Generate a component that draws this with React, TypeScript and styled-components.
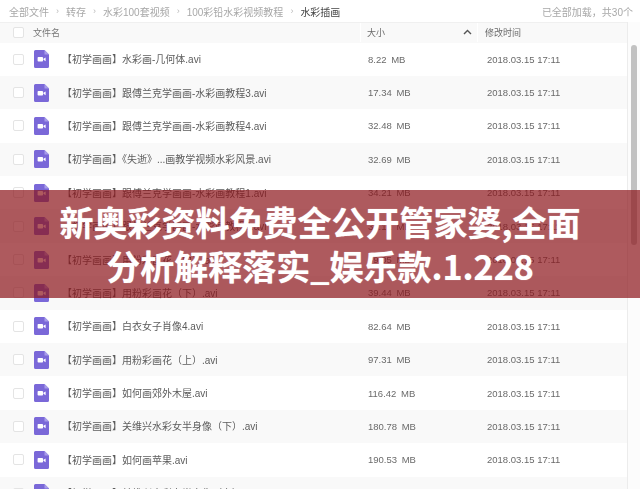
import React from 'react'
import styled, { createGlobalStyle } from 'styled-components'

const GlobalStyle = createGlobalStyle`
  html, body {
    margin: 0;
    padding: 0;
    background: #fff;
  }
  body {
    font-family: "Liberation Sans", "Noto Sans CJK SC", sans-serif;
  }
`

const Page = styled.div`
  position: relative;
  width: 640px;
  height: 489px;
  overflow: hidden;
  background: #fff;
`

const Blurred = styled.div`
  height: 489px;
  filter: blur(0.55px);
`

const Breadcrumb = styled.div`
  height: 22px;
  display: flex;
  align-items: center;
  justify-content: space-between;
  padding: 0 7px 0 9px;
  font-size: 10px;
  color: #a8a8a8;
`

const Crumbs = styled.div`
  display: flex;
  align-items: center;
  gap: 7px;
`

const Current = styled.span`
  color: #444;
`

const Sep = styled.span`
  color: #bbb;
  font-size: 9px;
`

const Body = styled.div`
  display: flex;
`

const Table = styled.div`
  flex: 1;
`

const Scrollbar = styled.div`
  width: 13px;
  height: 467px;
  box-sizing: border-box;
  border-left: 1px solid #ececec;
  padding: 23px 3px 0 3px;
  background: #fcfcfc;
`

const Thumb = styled.div`
  width: 6px;
  height: 200px;
  border-radius: 3px;
  background: #c2c2c2;
`

const Grid = styled.div<{ $striped?: boolean; $head?: boolean }>`
  display: grid;
  grid-template-columns: 360px 118px 1fr;
  align-items: center;
  height: ${p => (p.$head ? '20.5px' : '33.4px')};
  background: ${p => (p.$head || p.$striped ? '#f9f9f9' : '#fff')};
  ${p => p.$head && 'border-top: 1px solid #f0f0f0; box-sizing: border-box; padding-bottom: 1px;'}
`

const NameCell = styled.div`
  display: flex;
  align-items: center;
  min-width: 0;
`

const Box = styled.span`
  width: 9px;
  height: 9px;
  margin-left: 13px;
  flex: none;
  border: 1px solid #e4e4e4;
  border-radius: 2px;
  background: #fff;
`

const HeadLabel = styled.span`
  font-size: 9px;
  color: #777;
  margin-left: 9px;
`

const FileName = styled.span`
  font-size: 10px;
  color: #5c5c5c;
  margin: 0 0 1px 13px;
  white-space: nowrap;
`

const Icon = styled.svg`
  width: 15px;
  height: 18px;
  margin-left: 10px;
  flex: none;
`

const SizeCell = styled.div<{ $head?: boolean }>`
  display: flex;
  align-items: center;
  justify-content: space-between;
  height: 100%;
  box-sizing: border-box;
  padding: 0 5px 0 ${p => (p.$head ? '6px' : '8px')};
  font-size: ${p => (p.$head ? '9px' : '9.5px')};
  word-spacing: 2px;
  color: #6a6a6a;
  ${p => p.$head && 'border-left: 1px solid #fff; border-right: 1px solid #fff;'}
`

const DateCell = styled.div<{ $head?: boolean }>`
  padding-left: ${p => (p.$head ? '7px' : '9px')};
  font-size: ${p => (p.$head ? '9px' : '9.5px')};
  color: #6a6a6a;
`

const Banner = styled.div`
  position: absolute;
  left: 0;
  right: 0;
  top: 190px;
  height: 108px;
  box-sizing: border-box;
  padding-top: 10px;
  background: rgba(140, 20, 25, 0.7);
  color: #fff;
  font-family: "Noto Sans CJK SC", sans-serif;
  font-size: 34px;
  font-weight: 700;
  line-height: 44px;
  text-align: center;
  text-shadow: 0 0 1px rgba(255, 255, 255, 0.6);
`

const FileIcon = () => (
  <Icon viewBox="0 0 15 18">
    <path d="M0 1.5A1.5 1.5 0 0 1 1.5 0H10.5L15 4.5V16.5A1.5 1.5 0 0 1 13.5 18H1.5A1.5 1.5 0 0 1 0 16.5Z" fill="#7a68d8" />
    <path d="M10.5 0L15 4.5H10.5Z" fill="#a79cea" />
    <rect x="3.6" y="7" width="5.4" height="4.6" rx="0.8" fill="#fff" />
    <path d="M9.4 8.8L11.6 7.4V11.2L9.4 9.8Z" fill="#fff" />
  </Icon>
)

const files = [
  ['水彩画-几何体.avi', '8.22 MB'],
  ['跟傅兰克学画画-水彩画教程3.avi', '17.34 MB'],
  ['跟傅兰克学画画-水彩画教程4.avi', '32.48 MB'],
  ['《失逝》...画教学视频水彩风景.avi', '32.69 MB'],
  ['跟傅兰克学画画-水彩画教程1.avi', '34.21 MB'],
  ['跟傅兰克学画画-水彩画教程2.avi', '38.12 MB'],
  ['用粉彩画花（中）.avi', '39.05 MB'],
  ['用粉彩画花（下）.avi', '39.44 MB'],
  ['白衣女子肖像4.avi', '82.64 MB'],
  ['用粉彩画花（上）.avi', '97.31 MB'],
  ['如何画郊外木屋.avi', '116.42 MB'],
  ['关维兴水彩女半身像（下）.avi', '180.78 MB'],
  ['如何画苹果.avi', '190.53 MB'],
  ['关维兴水彩女半身像（上）.avi', '196.20 MB'],
]

export default function App() {
  return (
    <Page>
      <GlobalStyle />
      <Blurred>
        <Breadcrumb>
          <Crumbs>
            <span>全部文件</span><Sep>›</Sep>
            <span>转存</span><Sep>›</Sep>
            <span>水彩100套视频</span><Sep>›</Sep>
            <span>100彩铅水彩视频教程</span><Sep>›</Sep>
            <Current>水彩插画</Current>
          </Crumbs>
          <span>已全部加载，共30个</span>
        </Breadcrumb>
        <Body>
          <Table>
            <Grid $head>
              <NameCell><Box /><HeadLabel>文件名</HeadLabel></NameCell>
              <SizeCell $head>
                大小
                <svg width="9" height="6" viewBox="0 0 9 6">
                  <path d="M1 5L4.5 1.5L8 5" fill="none" stroke="#555" strokeWidth="1.4" />
                </svg>
              </SizeCell>
              <DateCell $head>修改时间</DateCell>
            </Grid>
            {files.map(([name, size], i) => (
              <Grid key={name} $striped={i % 2 === 1}>
                <NameCell>
                  <Box />
                  <FileIcon />
                  <FileName>【初学画画】{name}</FileName>
                </NameCell>
                <SizeCell>{size}</SizeCell>
                <DateCell>2018.03.15 17:11</DateCell>
              </Grid>
            ))}
          </Table>
          <Scrollbar><Thumb /></Scrollbar>
        </Body>
      </Blurred>
      <Banner>
        新奥彩资料免费全公开管家婆,全面
        <br />
        分析解释落实_娱乐款.1.228
      </Banner>
    </Page>
  )
}
